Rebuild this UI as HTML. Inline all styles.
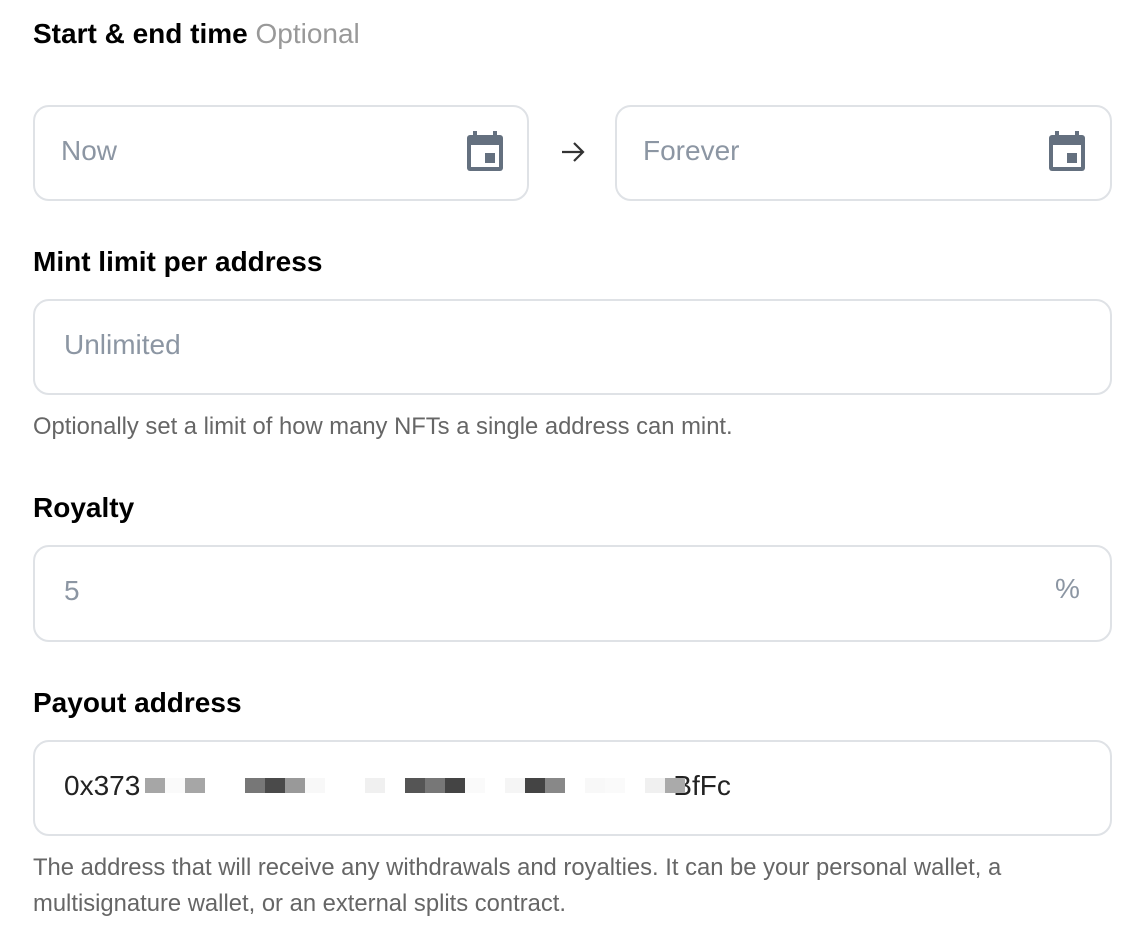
<!DOCTYPE html>
<html><head><meta charset="utf-8"><style>
body{margin:0;width:1140px;height:950px;background:#fff;font-family:"Liberation Sans",sans-serif;position:relative;overflow:hidden}
.a{position:absolute;white-space:nowrap}
.lab{font-size:28px;font-weight:bold;color:#000;line-height:30px}
.box{position:absolute;border:2px solid #dfe2e6;border-radius:16px;box-sizing:border-box}
.ph{font-size:28px;color:#8c96a3;line-height:30px}
.help{font-size:23.8px;color:#666;line-height:26px}
.b{position:absolute;top:778px;height:15px;width:20px}
</style></head><body>
<div class="a lab" style="left:33px;top:19px">Start &amp; end time <span style="font-weight:normal;color:#999">Optional</span></div>
<div class="box" style="left:33px;top:105px;width:496px;height:96px"></div>
<div class="a ph" style="left:61px;top:136px">Now</div>
<svg class="a" style="left:466px;top:131px" width="38" height="41" viewBox="0 0 38 41"><rect x="7" y="0" width="4" height="7" fill="#64707f"/><rect x="27" y="0" width="4" height="7" fill="#64707f"/><rect x="1" y="4" width="36" height="36" rx="3" fill="#64707f"/><rect x="5" y="14" width="28" height="22" fill="#fff"/><rect x="19" y="22" width="10" height="10" fill="#64707f"/></svg>
<svg class="a" style="left:560px;top:140px" width="26" height="24" viewBox="0 0 26 24"><path d="M2 12H23M14 3L23 12L14 21" stroke="#333" stroke-width="2.2" fill="none"/></svg>
<div class="box" style="left:615px;top:105px;width:497px;height:96px"></div>
<div class="a ph" style="left:643px;top:136px">Forever</div>
<svg class="a" style="left:1048px;top:131px" width="38" height="41" viewBox="0 0 38 41"><rect x="7" y="0" width="4" height="7" fill="#64707f"/><rect x="27" y="0" width="4" height="7" fill="#64707f"/><rect x="1" y="4" width="36" height="36" rx="3" fill="#64707f"/><rect x="5" y="14" width="28" height="22" fill="#fff"/><rect x="19" y="22" width="10" height="10" fill="#64707f"/></svg>

<div class="a lab" style="left:33px;top:247px">Mint limit per address</div>
<div class="box" style="left:33px;top:299px;width:1079px;height:96px"></div>
<div class="a ph" style="left:64px;top:330px">Unlimited</div>
<div class="a help" style="left:33px;top:414px">Optionally set a limit of how many NFTs a single address can mint.</div>

<div class="a lab" style="left:33px;top:493px">Royalty</div>
<div class="box" style="left:33px;top:545px;width:1079px;height:97px"></div>
<div class="a ph" style="left:64px;top:576px">5</div>
<div class="a ph" style="left:1055px;top:574px">%</div>

<div class="a lab" style="left:33px;top:688px">Payout address</div>
<div class="box" style="left:33px;top:740px;width:1079px;height:96px"></div>
<div class="a" style="left:64px;top:771px;font-size:28px;line-height:30px;color:#222">0x373<span style="display:inline-block;width:533px"></span>BfFc</div>
<div class="b" style="left:145px;background:#a6a6a6"></div><div class="b" style="left:165px;background:#fafafa"></div><div class="b" style="left:185px;background:#a6a6a6"></div>
<div class="b" style="left:245px;background:#777"></div><div class="b" style="left:265px;background:#4a4a4a"></div><div class="b" style="left:285px;background:#999"></div><div class="b" style="left:305px;background:#f8f8f8"></div>
<div class="b" style="left:365px;background:#f0f0f0"></div><div class="b" style="left:405px;background:#555"></div><div class="b" style="left:425px;background:#777"></div><div class="b" style="left:445px;background:#444"></div><div class="b" style="left:465px;background:#fafafa"></div>
<div class="b" style="left:505px;background:#f5f5f5"></div><div class="b" style="left:525px;background:#444"></div><div class="b" style="left:545px;background:#888"></div>
<div class="b" style="left:585px;background:#f8f8f8"></div><div class="b" style="left:605px;background:#fafafa"></div><div class="b" style="left:645px;background:#f0f0f0"></div><div class="b" style="left:665px;background:#aaa"></div>
<div class="a help" style="left:33px;top:855px">The address that will receive any withdrawals and royalties. It can be your personal wallet, a</div>
<div class="a help" style="left:33px;top:891px">multisignature wallet, or an external splits contract.</div>
</body></html>
